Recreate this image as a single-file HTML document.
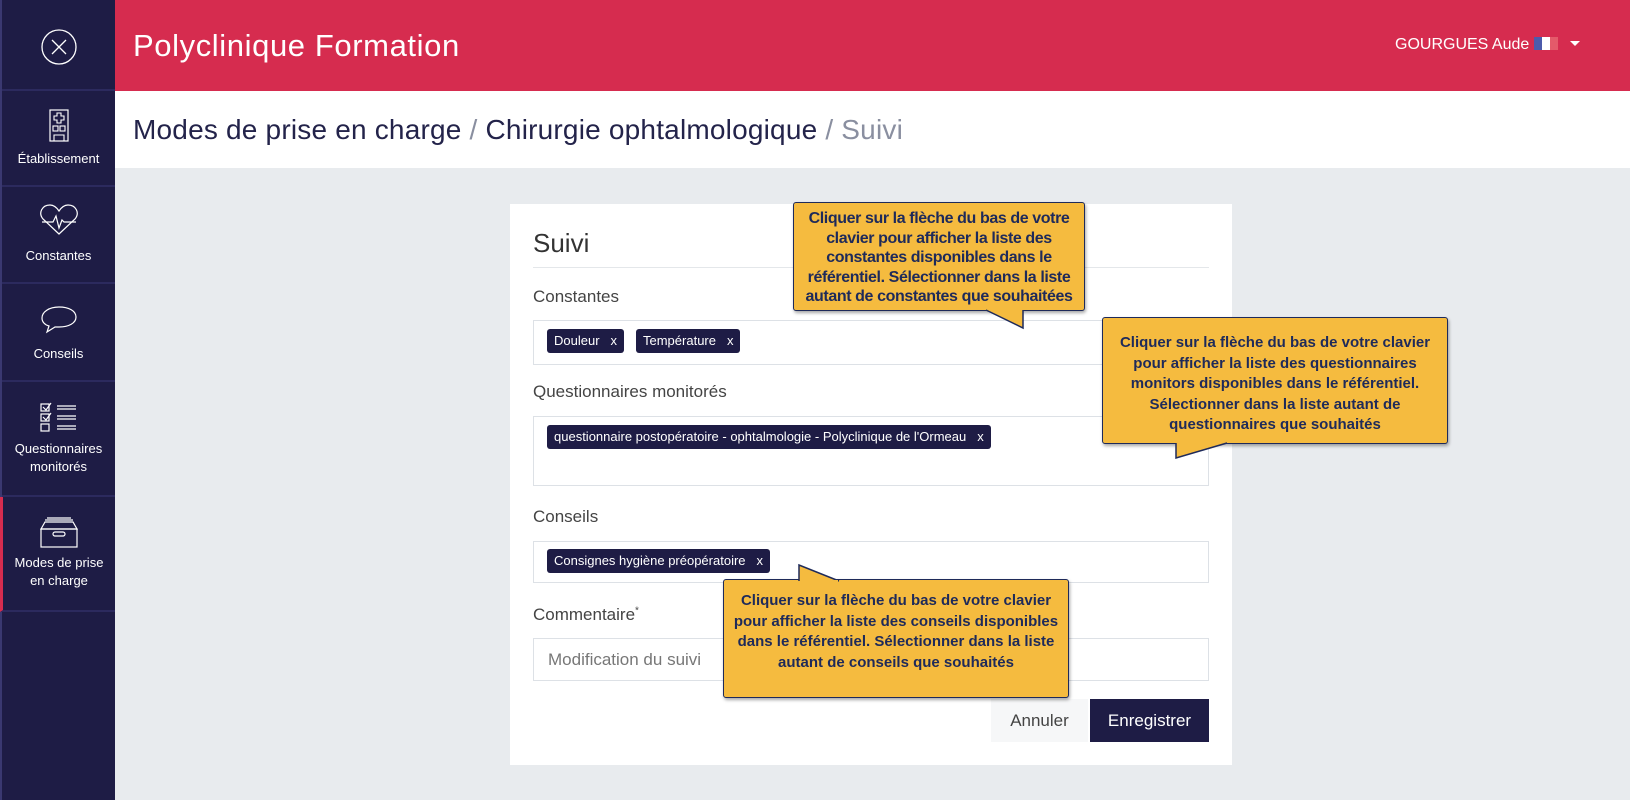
<!DOCTYPE html>
<html><head><meta charset="utf-8"><style>
*{box-sizing:border-box;margin:0;padding:0}
body{width:1630px;height:800px;overflow:hidden;background:#e8ebee;font-family:"Liberation Sans",sans-serif;position:relative}
.sb{position:absolute;left:0;top:0;width:115px;height:800px;background:#1e1c45;border-left:2px solid #3a3870}
.sb .it{position:absolute;left:0;width:113px;border-bottom:2px solid #2c2a5e;color:#fff;font-size:13px;text-align:center;line-height:18px}
.sb svg{display:block;margin:0 auto}
.hdr{position:absolute;left:115px;top:0;right:0;height:91px;background:#d62c4f;color:#fff}
.hdr .t{position:absolute;left:18px;top:28px;font-size:31px;letter-spacing:.6px}
.hdr .u{position:absolute;left:1280px;top:36px;font-size:16px}
.bc{position:absolute;left:115px;top:91px;right:0;height:77px;background:#fff;font-size:28px;color:#23234a;padding:22px 0 0 18px;letter-spacing:.2px}
.bc .g{color:#8a8fa0}
.card{position:absolute;left:510px;top:204px;width:722px;height:561px;background:#fff}
.lbl{position:absolute;left:23px;font-size:17px;color:#444}
.inp{position:absolute;left:23px;width:676px;border:1px solid #dde1e6;background:#fff}
.tag{position:absolute;height:24px;background:#1e1c45;color:#fff;font-size:13px;line-height:24px;padding:0 7px;border-radius:3px;white-space:nowrap}
.tag b{font-weight:normal;margin-left:11px}
.tip{position:absolute;background:#f5bb3f;border:1.5px solid #1e2a5a;border-radius:3px;box-shadow:1px 2px 3px rgba(0,0,0,.35);color:#1e2a5a;font-weight:bold;font-size:15px;text-align:center;line-height:20.5px;white-space:nowrap}
</style></head><body>
<div class="sb">
 <div class="it" style="top:0;height:91px"><svg width="40" height="40" viewBox="0 0 40 40" style="margin-top:27px"><circle cx="20" cy="20" r="17" fill="none" stroke="#fff" stroke-width="1.3"/><path d="M13 13L27 27M27 13L13 27" stroke="#fff" stroke-width="1.3"/></svg></div>
 <div class="it" style="top:91px;height:96px"><svg width="24" height="34" viewBox="0 0 24 34" style="margin-top:18px"><rect x="3" y="1" width="18" height="31" fill="none" stroke="#fff" stroke-width="1.2"/><path d="M10 4h4v3h3v4h-3v3h-4v-3H7V7h3z" fill="none" stroke="#fff" stroke-width="1.1"/><rect x="6" y="17" width="5" height="5" fill="none" stroke="#fff" stroke-width="1.1"/><rect x="13" y="17" width="5" height="5" fill="none" stroke="#fff" stroke-width="1.1"/><path d="M7 32v-6h10v6" fill="none" stroke="#fff" stroke-width="1.1"/></svg><div style="margin-top:7px">Établissement</div></div>
 <div class="it" style="top:187px;height:97px"><svg width="40" height="32" viewBox="0 0 40 32" style="margin-top:17px"><path d="M20 30L4 15C-1 9 3 1 11 1c4 0 7 3 9 6 2-3 5-6 9-6 8 0 12 8 7 14z" fill="none" stroke="#fff" stroke-width="1.2"/><path d="M3 18h11l3-6 3 12 3-8 2 2h12" fill="none" stroke="#fff" stroke-width="1.2"/></svg><div style="margin-top:11px">Constantes</div></div>
 <div class="it" style="top:284px;height:98px"><svg width="38" height="28" viewBox="0 0 38 28" style="margin-top:22px"><path d="M19 1C9 1 2 6 2 12c0 4 3 7 7 8l-2 6 8-5h4c10 0 17-4 17-10S29 1 19 1z" fill="none" stroke="#fff" stroke-width="1.2"/></svg><div style="margin-top:11px">Conseils</div></div>
 <div class="it" style="top:382px;height:115px"><svg width="38" height="32" viewBox="0 0 38 32" style="margin-top:20px"><g fill="none" stroke="#fff" stroke-width="1.2"><rect x="1" y="2" width="8" height="7"/><rect x="1" y="12" width="8" height="7"/><rect x="1" y="22" width="8" height="7"/><path d="M3 5l3 3 5-7M3 15l3 3 5-7"/><path d="M17 4h19M17 7h19M17 14h19M17 17h19M17 24h19M17 27h19"/></g></svg><div style="margin-top:6px">Questionnaires<br>monitorés</div></div>
 <div class="it" style="top:497px;height:115px;border-left:3px solid #d62c4f;left:-2px;width:115px"><svg width="40" height="32" viewBox="0 0 40 32" style="margin-top:19px"><g fill="none" stroke="#fff" stroke-width="1.2"><path d="M8 2h24M6 4h28"/><path d="M6 6h28l4 7H2z"/><rect x="2" y="13" width="36" height="18"/><rect x="14" y="16" width="12" height="4" rx="2"/></g></svg><div style="margin-top:6px">Modes de prise<br>en charge</div></div>
</div>
<div class="hdr"><div class="t">Polyclinique Formation</div>
<div class="u">GOURGUES Aude <span style="display:inline-block;vertical-align:-1px;width:24px;height:13px;background:linear-gradient(90deg,#4c5bab 0 33%,#fff 33% 66%,#e45a6a 66%)"></span><span style="display:inline-block;margin-left:12px;border-left:5px solid transparent;border-right:5px solid transparent;border-top:5px solid #fff;vertical-align:3px"></span></div></div>
<div class="bc" style="padding-top:23px">Modes de prise en charge <span class="g">/</span> Chirurgie ophtalmologique <span class="g">/ Suivi</span></div>
<div class="card">
 <div style="position:absolute;left:23px;top:24px;font-size:26px;color:#333">Suivi</div>
 <div style="position:absolute;left:23px;top:63px;width:676px;border-top:1px solid #e4e7ea"></div>
 <div class="lbl" style="top:83px">Constantes</div>
 <div class="inp" style="top:116px;height:45px"></div>
 <div class="tag" style="left:37px;top:125px">Douleur<b>x</b></div>
 <div class="tag" style="left:126px;top:125px">Température<b>x</b></div>
 <div class="lbl" style="top:178px">Questionnaires monitorés</div>
 <div class="inp" style="top:212px;height:70px"></div>
 <div class="tag" style="left:37px;top:221px">questionnaire postopératoire - ophtalmologie - Polyclinique de l'Ormeau<b>x</b></div>
 <div class="lbl" style="top:303px">Conseils</div>
 <div class="inp" style="top:337px;height:42px"></div>
 <div class="tag" style="left:37px;top:345px">Consignes hygiène préopératoire<b>x</b></div>
 <div class="lbl" style="top:401px">Commentaire<sup style="font-size:10px">*</sup></div>
 <div class="inp" style="top:434px;height:43px;font-size:17px;color:#777;padding:11px 14px">Modification du suivi</div>
 <div style="position:absolute;left:481px;top:495px;width:97px;height:43px;background:#f6f7f8;color:#444;font-size:17px;text-align:center;line-height:43px">Annuler</div>
 <div style="position:absolute;left:580px;top:495px;width:119px;height:43px;background:#1e1c45;color:#fff;font-size:17px;text-align:center;line-height:43px">Enregistrer</div>
</div>
<div class="tip" style="left:793px;top:202px;width:292px;height:109px;padding-top:6px;font-size:16px;letter-spacing:-.4px;line-height:19.5px">Cliquer sur la flèche du bas de votre<br>clavier pour afficher la liste des<br>constantes disponibles dans le<br>référentiel. Sélectionner dans la liste<br>autant de constantes que souhaitées</div>
<svg style="position:absolute;left:985px;top:308px" width="45" height="24"><path d="M1 1.5L38 1.5L38 20z" fill="#f5bb3f"/><path d="M1 2L38 20L38 2" fill="none" stroke="#1e2a5a" stroke-width="1.5"/><path d="M2 0.5H37.5" stroke="#f5bb3f" stroke-width="2"/></svg>
<div class="tip" style="left:1102px;top:317px;width:346px;height:127px;padding-top:15px">Cliquer sur la flèche du bas de votre clavier<br>pour afficher la liste des questionnaires<br>monitors disponibles dans le référentiel.<br>Sélectionner dans la liste autant de<br>questionnaires que souhaités</div>
<svg style="position:absolute;left:1170px;top:441px" width="60" height="22"><path d="M6 1.5V17L57 1.5z" fill="#f5bb3f"/><path d="M6 2V17L57 2" fill="none" stroke="#1e2a5a" stroke-width="1.5"/></svg>
<div class="tip" style="left:723px;top:579px;width:346px;height:119px;padding-top:11px">Cliquer sur la flèche du bas de votre clavier<br>pour afficher la liste des conseils disponibles<br>dans le référentiel. Sélectionner dans la liste<br>autant de conseils que souhaités</div>
<svg style="position:absolute;left:793px;top:563px" width="50" height="20"><path d="M6 18V2L46 18z" fill="#f5bb3f"/><path d="M6 18V2L46 18" fill="none" stroke="#1e2a5a" stroke-width="1.5"/><path d="M7 18.5H45" stroke="#f5bb3f" stroke-width="3"/></svg>
</body></html>
